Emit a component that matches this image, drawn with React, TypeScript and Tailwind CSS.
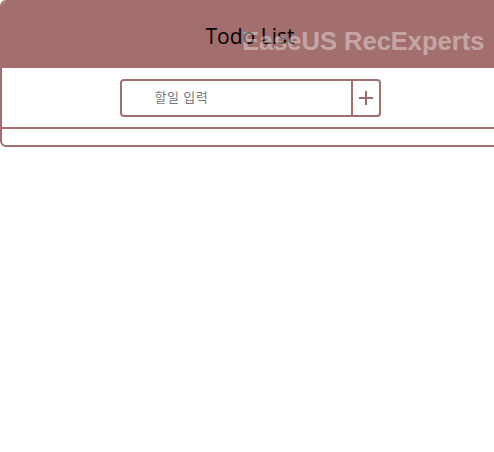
import React, { useState } from 'react';

export default function App() {
  const [todo, setTodo] = useState('');

  return (
    <div className="relative w-full h-[452px] overflow-hidden bg-white" style={{ fontFamily: '"Noto Sans", "Noto Sans CJK KR", sans-serif' }}>
      <div className="w-[500px] border-2 border-[#a26e6e] rounded-md overflow-hidden">
        <header className="h-[66px] bg-[#a26e6e] flex items-center justify-center pt-[4px]">
          <h1 className="text-[21px] text-black" style={{ fontFamily: '"Open Sans", "Liberation Sans", sans-serif' }}>Todo List</h1>
        </header>
        <form
          onSubmit={(e) => e.preventDefault()}
          className="flex justify-center pt-[11px] pb-[10px] border-b-2 border-[#a26e6e]"
        >
          <div className="flex w-[261px] h-[38px] border-2 border-[#a26e6e] rounded-[4px]">
            <input
              type="text"
              value={todo}
              onChange={(e) => setTodo(e.target.value)}
              placeholder="할일 입력"
              className="flex-1 min-w-0 pl-[33px] text-[13px] tracking-[0.5px] outline-none placeholder:text-[#777]"
            />
            <button type="submit" className="w-[28px] border-l-2 border-[#a26e6e] flex items-center justify-center">
              <svg width="14" height="14" viewBox="0 0 14 14" fill="none" stroke="#9b6a6a" strokeWidth="2">
                <path d="M7 0v14M0 7h14" />
              </svg>
            </button>
          </div>
        </form>
        <ul className="h-[16px]"></ul>
      </div>
      <div
        className="absolute left-[242px] top-[22px] text-[25.5px] font-bold text-white/40 pointer-events-none whitespace-nowrap"
        style={{ fontFamily: '"Liberation Sans", Arial, sans-serif' }}
      >
        EaseUS RecExperts
      </div>
    </div>
  );
}
